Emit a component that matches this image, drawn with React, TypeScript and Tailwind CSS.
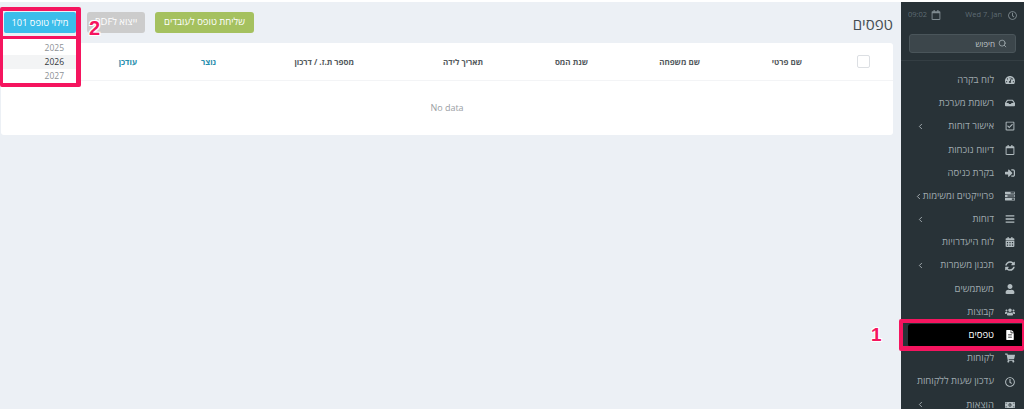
import React from "react";
import { FaTachometerAlt, FaInbox, FaSignInAlt, FaBars, FaCalendarAlt, FaSyncAlt, FaUser, FaUsers, FaFileAlt, FaShoppingCart, FaMoneyBillAlt, FaRegClock, FaRegCalendar, FaRegCheckSquare } from "react-icons/fa";
import { FiChevronLeft, FiSearch } from "react-icons/fi";

function TasksIcon({ className }: { className?: string }) {
  return (
    <svg viewBox="0 0 16 14" width="1em" height="1em" fill="currentColor" className={className}>
      <rect x="0" y="0" width="16" height="4" rx="0.5" />
      <rect x="0" y="5" width="16" height="4" rx="0.5" />
      <rect x="0" y="10" width="16" height="4" rx="0.5" />
      <rect x="9" y="1" width="6" height="2" fill="#283237" />
      <rect x="4" y="6" width="11" height="2" fill="#283237" />
      <rect x="11" y="11" width="4" height="2" fill="#283237" />
    </svg>
  );
}

const items: [string, React.ComponentType<{ className?: string }>, boolean?, boolean?][] = [
  ["לוח בקרה", FaTachometerAlt],
  ["רשומת מערכת", FaInbox],
  ["אישור דוחות", FaRegCheckSquare, true],
  ["דיווח נוכחות", FaRegCalendar],
  ["בקרת כניסה", FaSignInAlt],
  ["פרוייקטים ומשימות", TasksIcon, true],
  ["דוחות", FaBars, true],
  ["לוח היעדרויות", FaCalendarAlt],
  ["תכנון משמרות", FaSyncAlt, true],
  ["משתמשים", FaUser],
  ["קבוצות", FaUsers],
  ["טפסים", FaFileAlt, false, true],
  ["לקוחות", FaShoppingCart],
  ["עדכון שעות ללקוחות", FaRegClock],
  ["הוצאות", FaMoneyBillAlt, true],
];

const cols: [string, boolean?][] = [
  ["שם פרטי"],
  ["שם משפחה"],
  ["שנת המס"],
  ["תאריך לידה"],
  ["מספר ת.ז. / דרכון"],
  ["נוצר", true],
  ["עודכן", true],
];

export default function App() {
  return (
    <div dir="rtl" className="relative flex h-[409px] w-[1024px] overflow-hidden bg-white pt-[2px] font-['Open_Sans','Liberation_Sans',sans-serif]">
      <aside className="flex w-[123px] shrink-0 flex-col bg-[#283237] text-[#9fa9ae]">
        <div className="flex h-[26px] shrink-0 items-center justify-between px-[7px] text-[7.5px] text-[#5f6c74]" dir="ltr">
          <div className="flex items-center gap-[4px]">
            <span>09:02</span>
            <FaRegCalendar className="text-[10px] text-[#7f8b91]" />
          </div>
          <div className="flex items-center gap-[6px]">
            <span>Wed 7. Jan</span>
            <FaRegClock className="text-[9px] text-[#7f8b91]" />
          </div>
        </div>
        <div className="shrink-0 border-b border-[#343e43] pb-[7px] pt-[6px]">
          <div className="mx-[8px] flex h-[19px] items-center gap-[3px] rounded-[3px] border border-[#4a555a] bg-[#3c464b] px-[8px] text-[8px] text-[#c2cacd]">
            <FiSearch className="text-[9px] text-[#aab4b8]" />
            <span>חיפוש</span>
          </div>
        </div>
        <nav className="flex flex-col pt-[7.5px]">
          {items.map(([label, Icon, chevron, active]) => (
            <div
              key={label}
              className={`flex h-[23.2px] shrink-0 items-center pr-[6px] text-[9.5px] ${active ? "ml-[7px] rounded-l-[3px] bg-black text-white" : ""}`}
            >
              <span className="flex w-[16px] shrink-0 justify-center">
                <Icon className={`text-[10px] ${active ? "text-white" : "text-[#b3bdc1]"}`} />
              </span>
              <span className="mr-[8px] whitespace-nowrap">{label}</span>
              {chevron && <FiChevronLeft className="mr-auto ml-[15px] shrink-0 text-[9px] text-[#c2cacd]" />}
            </div>
          ))}
        </nav>
      </aside>

      <main className="flex-1 bg-[#ecf0f5]">
        <div className="flex h-[41px] items-center justify-between pl-[4px] pr-[8px]">
          <h1 className="pt-[3px] text-[15px] font-normal text-[#454d52]">טפסים</h1>
          <div className="flex items-center gap-[10px]">
            <button className="flex h-[21px] w-[99px] items-center justify-center rounded-[3px] bg-[#a5c15f] text-[9.5px] text-white">שליחת טופס לעובדים</button>
            <button className="flex h-[21px] w-[58px] items-center justify-center rounded-[3px] bg-[#cccccc] text-[9.5px] text-white">ייצוא לPDF</button>
            <button className="mr-[1px] flex h-[21px] w-[72px] items-center justify-center rounded-[2px] bg-[#3cbdea] text-[9.25px] text-white">מילוי טופס 101</button>
          </div>
        </div>
        <div className="mr-[8px] ml-[1px] rounded-[3px] bg-white">
          <div className="grid h-[38px] grid-cols-[91px_102px_112px_105px_129px_138px_79px_1fr] items-center border-b border-[#f3f4f6] text-[8px] font-bold text-[#555b60]">
            <div className="flex justify-start pr-[23px]">
              <span className="h-[13px] w-[13px] rounded-[2px] border border-[#dcdfe3] bg-white" />
            </div>
            {cols.map(([label, blue]) => (
              <div key={label} className={blue ? "text-[#2a8fae]" : ""}>{label}</div>
            ))}
          </div>
          <div className="flex h-[54px] items-center justify-center text-[9px] text-[#9a9ea3]">No data</div>
        </div>
      </main>

      {/* Year dropdown, open over the table */}
      <div className="absolute left-[3px] top-[39px] flex h-[44px] w-[73px] flex-col bg-white pt-[2px] text-[8.5px] text-[#8d9196]">
        <div className="flex h-[14px] items-center pr-[12px]">2025</div>
        <div className="flex h-[14px] items-center bg-[#f3f4f5] pr-[12px] text-[#33393e]">2026</div>
        <div className="flex h-[14px] items-center pr-[12px]">2027</div>
      </div>

      {/* Annotation frames */}
      <div className="pointer-events-none absolute left-0 top-[7px] h-[80px] w-[81px] rounded-[2px] border-b-[4px] border-l-[3px] border-r-[5px] border-t-[4px] border-[#f5155f]" />
      <div className="pointer-events-none absolute left-[3px] top-[36px] h-[3px] w-[73px] bg-[#f5155f]" />
      <div className="pointer-events-none absolute left-[899px] top-[319px] h-[32px] w-[125px] rounded-[2px] border-b-[5px] border-l-[4px] border-r-[2px] border-t-[4px] border-[#f5155f]" />
      <span className="absolute left-[89px] top-[18px] font-['Liberation_Sans',sans-serif] text-[20px] font-bold leading-none text-[#f5155f] [text-shadow:1px_1px_0_#fff,-1px_-1px_0_#fff,1px_-1px_0_#fff,-1px_1px_0_#fff]">2</span>
      <span className="absolute left-[871px] top-[325px] font-['Liberation_Sans',sans-serif] text-[19px] font-bold leading-none text-[#f5155f] [text-shadow:1px_1px_0_#fff,-1px_-1px_0_#fff,1px_-1px_0_#fff,-1px_1px_0_#fff]">1</span>
    </div>
  );
}
